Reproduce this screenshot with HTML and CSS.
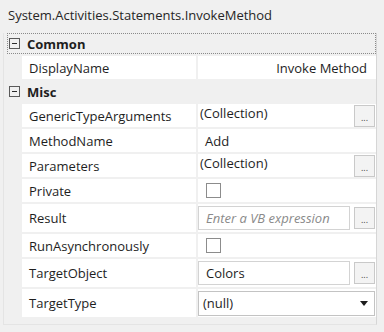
FILE: index.html
```html
<!DOCTYPE html>
<html>
<head>
<meta charset="utf-8">
<link rel="stylesheet" href="styles.css">
</head>
<body>
<div class="panel">
  <div class="title">System.Activities.Statements.InvokeMethod</div>
  <div class="grid">
    <div class="cat focus"><span class="toggle"></span><span class="cat-name">Common</span></div>
    <div class="row"><div class="name">DisplayName</div><div class="val val-right">Invoke Method</div></div>
    <div class="cat"><span class="toggle"></span><span class="cat-name">Misc</span></div>
    <div class="row"><div class="name">GenericTypeArguments</div><div class="val val-btn"><span class="coll">(Collection)</span><span class="dots">...</span></div></div>
    <div class="row"><div class="name">MethodName</div><div class="val"><span class="plain">Add</span></div></div>
    <div class="row"><div class="name">Parameters</div><div class="val val-btn"><span class="coll">(Collection)</span><span class="dots">...</span></div></div>
    <div class="row"><div class="name">Private</div><div class="val"><span class="check"></span></div></div>
    <div class="row tall"><div class="name">Result</div><div class="val val-btn"><span class="input placeholder">Enter a VB expression</span><span class="dots">...</span></div></div>
    <div class="row"><div class="name">RunAsynchronously</div><div class="val"><span class="check"></span></div></div>
    <div class="row tall"><div class="name">TargetObject</div><div class="val val-btn"><span class="input">Colors</span><span class="dots">...</span></div></div>
    <div class="row tall"><div class="name">TargetType</div><div class="val"><span class="select">(null)<span class="arrow"></span></span></div></div>
  </div>
</div>
</body>
</html>
```
FILE: styles.css
```css
html, body {
  margin: 0;
  padding: 0;
}
body {
  background: #f0f0f0;
  font-family: "Open Sans", "Noto Sans", sans-serif;
  font-size: 13px;
  color: #1e1e1e;
  width: 384px;
  height: 332px;
  overflow: hidden;
}
.panel {
  padding: 0 0 0 3px;
}
.title {
  height: 33px;
  line-height: 31px;
  padding-left: 5px;
  font-size: 13px;
  color: #262626;
}
.grid {
  width: 372px;
  border-right: 1px solid #d6d6d6;
  border-left: 1px solid #e4e4e4;
  border-bottom: 1px solid #e4e4e4;
  display: flex;
  flex-direction: column;
  gap: 2px;
  padding-bottom: 7px;
}
.cat {
  height: 21px;
  display: flex;
  align-items: center;
  gap: 7px;
  padding-left: 4px;
  font-weight: bold;
  font-size: 13px;
  border: 1px dotted transparent;
  box-sizing: border-box;
}
.cat.focus {
  border: 1px dotted #8a8a8a;
  margin-left: 3px;
  padding-left: 1px;
}
.toggle {
  width: 9px;
  height: 9px;
  border: 1px solid #5a5a5a;
  position: relative;
  flex: none;
}
.toggle::after {
  content: "";
  position: absolute;
  left: 2px;
  top: 4px;
  width: 5px;
  height: 1px;
  background: #2a2a2a;
}
.row {
  height: 23px;
  display: grid;
  grid-template-columns: 174px 1fr;
  margin-left: 18px;
  gap: 2px;
}
.row.tall {
  height: 28px;
}
.name {
  background: #fff;
  padding-left: 7px;
  display: flex;
  align-items: center;
}
.val {
  background: #fff;
  display: flex;
  align-items: center;
  padding-right: 1px;
}
.val-right {
  justify-content: flex-end;
  padding-right: 9px;
}
.val-btn {
  gap: 4px;
}
.coll {
  flex: 1;
  padding-left: 2px;
  align-self: flex-start;
  padding-top: 0;
}
.plain {
  padding-left: 7px;
}
.dots {
  width: 19px;
  height: 20px;
  border: 1px solid #c9c9c9;
  background: #f3f3f3;
  font-size: 9px;
  line-height: 24px;
  text-align: center;
  color: #444;
  flex: none;
  align-self: center;
  box-sizing: content-box;
  overflow: hidden;
}
.check {
  width: 13px;
  height: 13px;
  border: 1px solid #8c8c8c;
  margin-left: 8px;
  background: #fff;
}
.input {
  flex: 1;
  height: 24px;
  border: 1px solid #d3d3d3;
  padding-left: 7px;
  display: flex;
  align-items: center;
  box-sizing: border-box;
}
.placeholder {
  color: #8a8a8a;
  font-style: italic;
}
.select {
  flex: 1;
  height: 25px;
  border: 1px solid #c3c3c3;
  padding-left: 4px;
  display: flex;
  align-items: center;
  justify-content: space-between;
  box-sizing: border-box;
  padding-right: 6px;
}
.arrow {
  width: 0;
  height: 0;
  border-left: 4px solid transparent;
  border-right: 4px solid transparent;
  border-top: 5px solid #1e1e1e;
}
```
